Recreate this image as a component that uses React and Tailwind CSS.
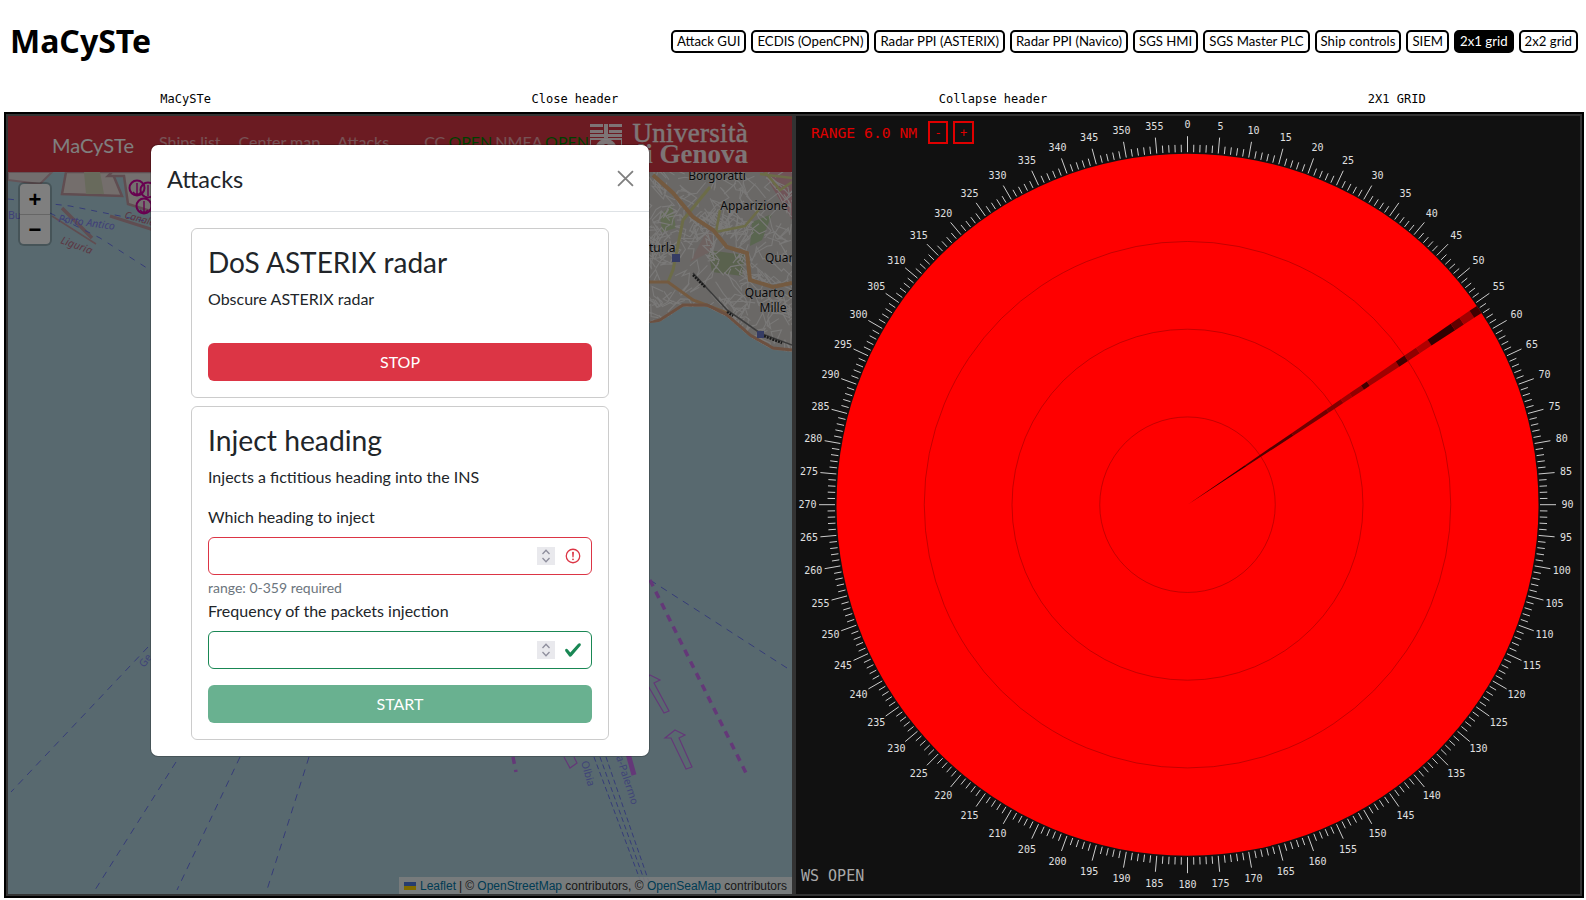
import React from 'react';

const navLinks = ['Attack GUI', 'ECDIS (OpenCPN)', 'Radar PPI (ASTERIX)', 'Radar PPI (Navico)', 'SGS HMI', 'SGS Master PLC', 'Ship controls', 'SIEM', '2x1 grid', '2x2 grid'];

// radar geometry, in page coordinates
const CX = 1187.5;
const CY = 504.7;
const R = 351;
const polar = (deg, r) => {
  const a = (deg * Math.PI) / 180;
  return [CX + r * Math.sin(a), CY - r * Math.cos(a)];
};

const wedgeBands = [
  [0, 0.2, '#300000'], [0.2, 0.36, '#500000'], [0.36, 0.48, '#700000'], [0.48, 0.53, '#800000'],
  [0.53, 0.56, '#a00000'], [0.56, 0.6, '#900000'], [0.6, 0.62, '#400000'], [0.62, 0.72, '#a00000'],
  [0.72, 0.75, '#400000'], [0.75, 0.79, '#900000'], [0.79, 0.83, '#b00000'], [0.83, 0.91, '#300000'],
  [0.91, 0.94, '#600000'], [0.94, 0.975, '#a00000'], [0.975, 1, '#400000'],
];

const Radar = () => {
  const degrees = Array.from({ length: 360 }, (_, i) => i);
  return (
    <svg viewBox="796 116 784 778" className="block h-full w-full">
      <circle cx={CX} cy={CY} r={R} fill="#ff0000" />
      {[87.75, 175.5, 263.25].map((r) => (
        <circle key={r} cx={CX} cy={CY} r={r} fill="none" stroke="#8a0000" strokeWidth="0.5" />
      ))}
      {wedgeBands.map(([from, to, color]) => {
        const pts = [polar(55.5, from * R), polar(56.9, from * R), polar(56.9, to * R), polar(55.5, to * R)];
        return <polygon key={from} points={pts.map((p) => p.join(',')).join(' ')} fill={color} />;
      })}
      {degrees.map((d) => {
        const [x1, y1] = polar(d, 352.5);
        const [x2, y2] = polar(d, d % 5 === 0 ? 368.5 : 360);
        return <line key={d} x1={x1} y1={y1} x2={x2} y2={y2} stroke="#cccccc" strokeWidth="1" />;
      })}
      {degrees.filter((d) => d % 5 === 0).map((d) => {
        const [x, y] = polar(d, 380);
        return (
          <text key={d} x={x} y={y} fill="#e0e0e0" fontSize="10" textAnchor="middle" dominantBaseline="central" className="font-['DejaVu_Sans_Mono',monospace]">
            {d}
          </text>
        );
      })}
    </svg>
  );
};

// cheap seeded noise for the street mesh of the map
const seeded = (seed) => () => {
  seed = (seed * 16807) % 2147483647;
  return seed / 2147483647;
};

const streets = () => {
  const rnd = seeded(4242);
  const out = [];
  for (let i = 0; i < 230; i++) {
    let x = 645 + rnd() * 150;
    let y = 172 + rnd() * 180;
    let d = `M${x.toFixed(1)} ${y.toFixed(1)}`;
    for (let j = 0; j < 4; j++) {
      x += (rnd() - 0.5) * 26;
      y += (rnd() - 0.5) * 26;
      d += `L${x.toFixed(1)} ${y.toFixed(1)}`;
    }
    out.push(d);
  }
  return out;
};

const MapLayer = () => (
  <svg viewBox="8 116 784 778" className="absolute inset-0 h-full w-full font-['Noto_Sans',sans-serif]">
    <rect x="8" y="116" width="784" height="778" fill="#b0d3de" />
    <defs>
      <clipPath id="land">
        <path d="M640 172H792V352L773 350L750 337L727 317L707 307L683 307L660 322L640 324Z" />
      </clipPath>
    </defs>

    {/* harbour */}
    <path d="M8 172H52L40 184L8 180Z" fill="#e4dcdc" stroke="#c8a8b0" strokeWidth="2" />
    <path d="M66 172H112L122 196L62 194Z" fill="#e8dcd8" stroke="#c09aa2" strokeWidth="2.5" />
    <path d="M84 172H100L104 194H86Z" fill="#d0d4b8" />
    <path d="M108 176L124 176L128 204L160 214V172H112Z" fill="#e8e0de" stroke="#c09aa2" strokeWidth="2.5" />
    <path d="M62 208L92 238" stroke="#c09aa2" strokeWidth="3.5" />
    <path d="M52 216L96 244" stroke="#c09aa2" strokeWidth="1.5" />
    <path d="M110 216L160 232" stroke="#c09aa2" strokeWidth="3" />
    <path d="M8 199L70 206L150 222" fill="none" stroke="#6c78f0" strokeDasharray="6 6" />
    <path d="M50 213L100 238L150 270" fill="none" stroke="#6c78f0" strokeDasharray="6 7" />
    <g fill="none" stroke="#d000a0" strokeWidth="2">
      <circle cx="137" cy="188" r="7.5" />
      <circle cx="148" cy="190" r="7.5" />
      <circle cx="144" cy="206" r="7.5" />
      <path d="M137 183V194M133 192Q137 197 141 192M144 201V212M140 210Q144 215 148 210M148 185V196" strokeWidth="1.4" />
    </g>
    <text x="58" y="222" fontSize="10.5" fontStyle="italic" fill="#8080f0" transform="rotate(8 58 222)">Porto Antico</text>
    <text x="60" y="243" fontSize="10.5" fontStyle="italic" fill="#b86a84" transform="rotate(20 60 243)">Liguria</text>
    <text x="124" y="218" fontSize="10" fontStyle="italic" fill="#b86a84" transform="rotate(15 124 218)">Canale</text>
    <text x="8" y="219" fontSize="10.5" fill="#8080f0">Bu</text>

    {/* city strip on the right */}
    <g clipPath="url(#land)">
      <rect x="640" y="172" width="152" height="185" fill="#d4d0cc" />
      <path d="M763 172H792V220Z" fill="#e0a8b0" />
      <path d="M708 250L745 255L742 276L712 272Z" fill="#b4c49c" />
      <path d="M752 222L772 214L762 240L750 246Z" fill="#b4cca0" />
      <path d="M660 215L672 205L676 228L662 232Z" fill="#c0d4a4" />
      <path d="M690 262L710 225L714 250Z" fill="#dcc4c0" />
      {streets().map((d, i) => (
        <path key={i} d={d} fill="none" stroke="#f4f2f0" strokeWidth="1.1" />
      ))}
      <path d="M710 187L683 220L673 270L668 282" fill="none" stroke="#d8d890" strokeWidth="3" />
      <path d="M720 210L716 232L745 226L762 206" fill="none" stroke="#d8d890" strokeWidth="2.5" />
      <path d="M760 174L792 178M765 172L780 190L792 182" fill="none" stroke="#d8d890" strokeWidth="2.5" />
      <path d="M653 175L673 193L693 217L713 230L727 247L747 253L750 280L773 287L792 283" fill="none" stroke="#e8b480" strokeWidth="4" />
      <path d="M640 282H668L693 300L727 313" fill="none" stroke="#e8b480" strokeWidth="3" />
      <path d="M693 273L727 310L760 333L792 345" fill="none" stroke="#777" strokeWidth="1.6" />
      <path d="M693 275L705 287M727 312L733 316M764 336L782 343" fill="none" stroke="#333" strokeWidth="2.5" strokeDasharray="2 1" />
      <path d="M650 323L660 320L683 305L707 305L727 315L750 335L773 348L792 350" fill="none" stroke="#d8a080" strokeWidth="3" />
      <rect x="672" y="254" width="8" height="8" fill="#6a78c8" />
      <rect x="757" y="331" width="7" height="7" fill="#6a78c8" />
      <g fill="#111" fontSize="12" textAnchor="middle" stroke="#ffffff" strokeWidth="0.4" paintOrder="stroke">
        <text x="717" y="180">Borgoratti</text>
        <text x="754" y="210">Apparizione</text>
        <text x="659" y="252">Sturla</text>
        <text x="785" y="262">Quarto</text>
        <text x="775" y="297">Quarto dei</text>
        <text x="773" y="312">Mille</text>
      </g>
    </g>

    {/* sea lanes */}
    <g fill="none" stroke="#6c78f0" strokeWidth="1" strokeDasharray="7 6">
      <path d="M148 647L11 792" />
      <path d="M176 762L95 890" />
      <path d="M240 757L177 890" />
      <path d="M309 757L266 893" />
      <path d="M650 580L787 668" />
      <path d="M594 757L642 885M600 757L646 885M606 757L650 885" strokeDasharray="5 3" />
    </g>
    <g fill="none" stroke="#c870f0" strokeWidth="3.5" strokeDasharray="7 6">
      <path d="M650 580L748 777" />
      <path d="M513 757L516 772" />
    </g>
    <path d="M627 750L634 775" stroke="#c870f0" strokeWidth="5" />
    <g fill="none" stroke="#c870f0" strokeWidth="1.2">
      <path d="M650 675L660 680L654 683L669 711L664 713L647 684L642 683Z" />
      <path d="M675 730L685 735L679 738L692 767L686 769L671 738L665 738Z" />
      <path d="M564 757L570 768L577 763L574 757" />
    </g>
    <g fill="#8088f0" fontSize="10.5">
      <text x="581" y="762" transform="rotate(74 581 762)">Olbia</text>
      <text x="616" y="757" transform="rotate(72 616 757)">a-Palermo</text>
      <text x="144" y="668" transform="rotate(-52 144 668)">Ge</text>
    </g>
  </svg>
);

const UnigeLogo = () => (
  <svg viewBox="0 0 32 40" className="mr-2 h-10 w-8 shrink-0" fill="#fff" fillOpacity="0.9">
    <path d="M0 0H13V3H0ZM19 0H32V3H19ZM0 6H13V9H0ZM19 6H32V9H19ZM14 0H18V14H14ZM0 10H32V13H0Z" />
    <path d="M0 15H32V26Q32 38 16 40Q0 38 0 26Z" fill="none" stroke="#fff" strokeOpacity="0.9" strokeWidth="2" />
    <circle cx="16" cy="26" r="11" />
    <rect x="14.5" y="20" width="3" height="11" fill="#d63744" fillOpacity="1" />
  </svg>
);

const Spinner = () => (
  <span className="flex h-[18px] w-[18px] flex-col items-center justify-center bg-[#e9e9ed]">
    <svg viewBox="0 0 18 18" className="h-[18px] w-[18px]" fill="none" stroke="#8f8f9d" strokeWidth="1.3">
      <path d="M5.5 7L9 3.2L12.5 7M5.5 11L9 14.8L12.5 11" />
    </svg>
  </span>
);

const ValidationField = ({ label, valid }) => (
  <>
    <label className="mb-2 block leading-6">{label}</label>
    <div className={`flex h-[38px] items-center rounded-md border pr-[9px] ${valid ? 'border-[#198754]' : 'border-[#dc3545]'}`}>
      <div className="flex-1" />
      <Spinner />
      <span className="ml-[9px] flex h-[18px] w-[18px] items-center justify-center">
        {valid ? (
          <svg viewBox="0 0 8 8" className="h-[18px] w-[18px]">
            <path fill="#198754" d="M2.3 6.73.6 4.53c-.4-1.04.46-1.4 1.1-.8l1.1 1.4 3.4-3.8c.6-.63 1.6-.27 1.2.7l-4 4.6c-.43.5-.8.4-1.1.1z" />
          </svg>
        ) : (
          <svg viewBox="0 0 12 12" className="h-5 w-5" fill="none" stroke="#dc3545" strokeWidth="0.85">
            <circle cx="6" cy="6" r="4.5" />
            <path strokeLinejoin="round" d="M5.8 3.6h.4L6 6.5z" />
            <circle cx="6" cy="8.2" r=".6" fill="#dc3545" stroke="none" />
          </svg>
        )}
      </span>
    </div>
  </>
);

const AttacksModal = () => (
  <div className="absolute inset-0 flex items-start justify-center pt-7">
    <div className="w-[500px] rounded-lg border border-black/20 bg-white bg-clip-padding font-[Lato,sans-serif] text-[#212529]">
      <div className="flex h-[67px] items-center justify-between border-b border-[#dee2e6] px-4">
        <h5 className="pt-0.5 text-[23.5px] leading-[34px]">Attacks</h5>
        <svg viewBox="0 0 16 16" className="-mr-px h-[17px] w-[17px]" stroke="#000" strokeOpacity="0.5" strokeWidth="1.7">
          <path d="M1 1L15 15M15 1L1 15" />
        </svg>
      </div>
      <div className="flex flex-col gap-2 px-10 py-4">
        <div className="rounded-md border border-black/20 p-4">
          <h3 className="mb-[7px] pt-px text-[28px] leading-[33.6px]">DoS ASTERIX radar</h3>
          <p className="leading-6">Obscure ASTERIX radar</p>
          <button className="mt-8 block h-[38px] w-full rounded-md bg-[#dc3545] leading-6 text-white">STOP</button>
        </div>
        <div className="rounded-md border border-black/20 p-4">
          <h3 className="mb-2 pt-px text-[28.3px] leading-[33.6px]">Inject heading</h3>
          <p className="mb-4 leading-6">Injects a fictitious heading into the INS</p>
          <ValidationField label="Which heading to inject" />
          <small className="mb-px mt-[2px] block text-sm leading-[21px] text-[#6c757d]">range: 0-359 required</small>
          <ValidationField label="Frequency of the packets injection" valid />
          <button className="mt-4 block h-[38px] w-full rounded-md bg-[#198754]/65 leading-6 text-white">START</button>
        </div>
      </div>
    </div>
  </div>
);

const MapPane = () => (
  <div className="relative overflow-hidden bg-[#b0d3de]">
    <MapLayer />

    <div className="relative flex h-14 items-center whitespace-nowrap bg-[#d63744] pl-[44px] pr-[44px] font-[Lato,sans-serif] text-white">
      <span className="mr-[25px] mt-[2px] text-xl">MaCySTe</span>
      <span className="mb-1 mr-[18px] text-white/55">Ships list</span>
      <span className="mb-1 mr-[17px] text-white/55">Center map</span>
      <span className="mb-1 mr-[35px] text-white/55">Attacks</span>
      <span className="mb-1 text-white/55 [word-spacing:-1px]">CC <span className="text-[#008000]">OPEN</span> NMEA <span className="text-[#008000]">OPEN</span></span>
      <div className="ml-auto flex shrink-0 items-center">
        <UnigeLogo />
        <div className="flex flex-col items-end font-['Liberation_Serif',serif] text-[27px] font-bold leading-[21px] text-white/90">
          <span className="font-normal tracking-[0.3px] [-webkit-text-stroke:0.4px_currentColor]">Università</span>
          <span>di Genova</span>
        </div>
      </div>
    </div>

    <div className="absolute left-3 top-[68px] w-[30px] rounded bg-white pt-px shadow-[0_0_0_2px_rgba(0,0,0,0.2)] font-['Liberation_Sans',sans-serif] text-[22px] font-bold text-black">
      <div className="flex h-[30px] items-center justify-center border-b border-[#ccc]">+</div>
      <div className="flex h-[29px] items-center justify-center">−</div>
    </div>

    <div className="absolute bottom-0 right-0 flex h-[17px] items-center bg-white/80 px-[5px] font-['Liberation_Sans',sans-serif] text-xs text-[#333]">
      <svg viewBox="0 0 12 8" className="mr-1 h-2 w-3">
        <rect width="12" height="4" fill="#4C7BE1" />
        <rect y="4" width="12" height="4" fill="#FFD500" />
      </svg>
      <span className="text-[#0078a8]">Leaflet</span>
      <span className="mx-[3px]">|</span>
      <span>© <span className="text-[#0078a8]">OpenStreetMap</span> contributors, © <span className="text-[#0078a8]">OpenSeaMap</span> contributors</span>
    </div>

    <div className="absolute inset-0 bg-black/50" />
    <AttacksModal />
  </div>
);

const RadarPane = () => (
  <div className="relative overflow-hidden bg-[#111111] font-['DejaVu_Sans_Mono',monospace]">
    <Radar />
    <div className="absolute left-[15px] top-[5px] flex items-center text-[14.7px] text-[#e00000]">
      <span className="pt-px">RANGE 6.0 NM</span>
      <span className="ml-[11px] flex h-[23px] w-5 items-center justify-center border-2 border-[#e00000] text-xs">-</span>
      <span className="ml-[5px] flex h-[23px] w-[21px] items-center justify-center border-2 border-[#e00000] text-xs">+</span>
    </div>
    <span className="absolute bottom-[7px] left-[5px] text-[15px] text-[#a8a8a8]">WS OPEN</span>
  </div>
);

const App = () => (
  <div className="h-[900px] w-[1586px] overflow-hidden bg-white font-['Noto_Sans',sans-serif] text-black">
    <header className="flex h-[82px] items-center pl-[10px] pr-2">
      <h1 className="text-[32px] font-bold">MaCySTe</h1>
      <nav className="ml-auto flex gap-[5px]">
        {navLinks.map((name) => (
          <button
            key={name}
            className={`h-[23px] rounded-[5px] border-2 border-black px-1 font-[Lato,sans-serif] text-[13.2px] leading-[19px] ${name === '2x1 grid' ? 'bg-black text-white' : 'bg-white text-black'}`}
          >
            {name}
          </button>
        ))}
      </nav>
    </header>
    <div className="flex h-[30px] items-center justify-around pt-1 font-['DejaVu_Sans_Mono',monospace] text-xs">
      <span>MaCySTe</span>
      <span>Close header</span>
      <span>Collapse header</span>
      <span>2X1 GRID</span>
    </div>
    <div className="ml-1 h-[786px] w-[1580px] border-2 border-black bg-[#333333] p-0.5">
      <div className="grid h-full grid-cols-2 gap-1">
        <MapPane />
        <RadarPane />
      </div>
    </div>
  </div>
);

export default App;
